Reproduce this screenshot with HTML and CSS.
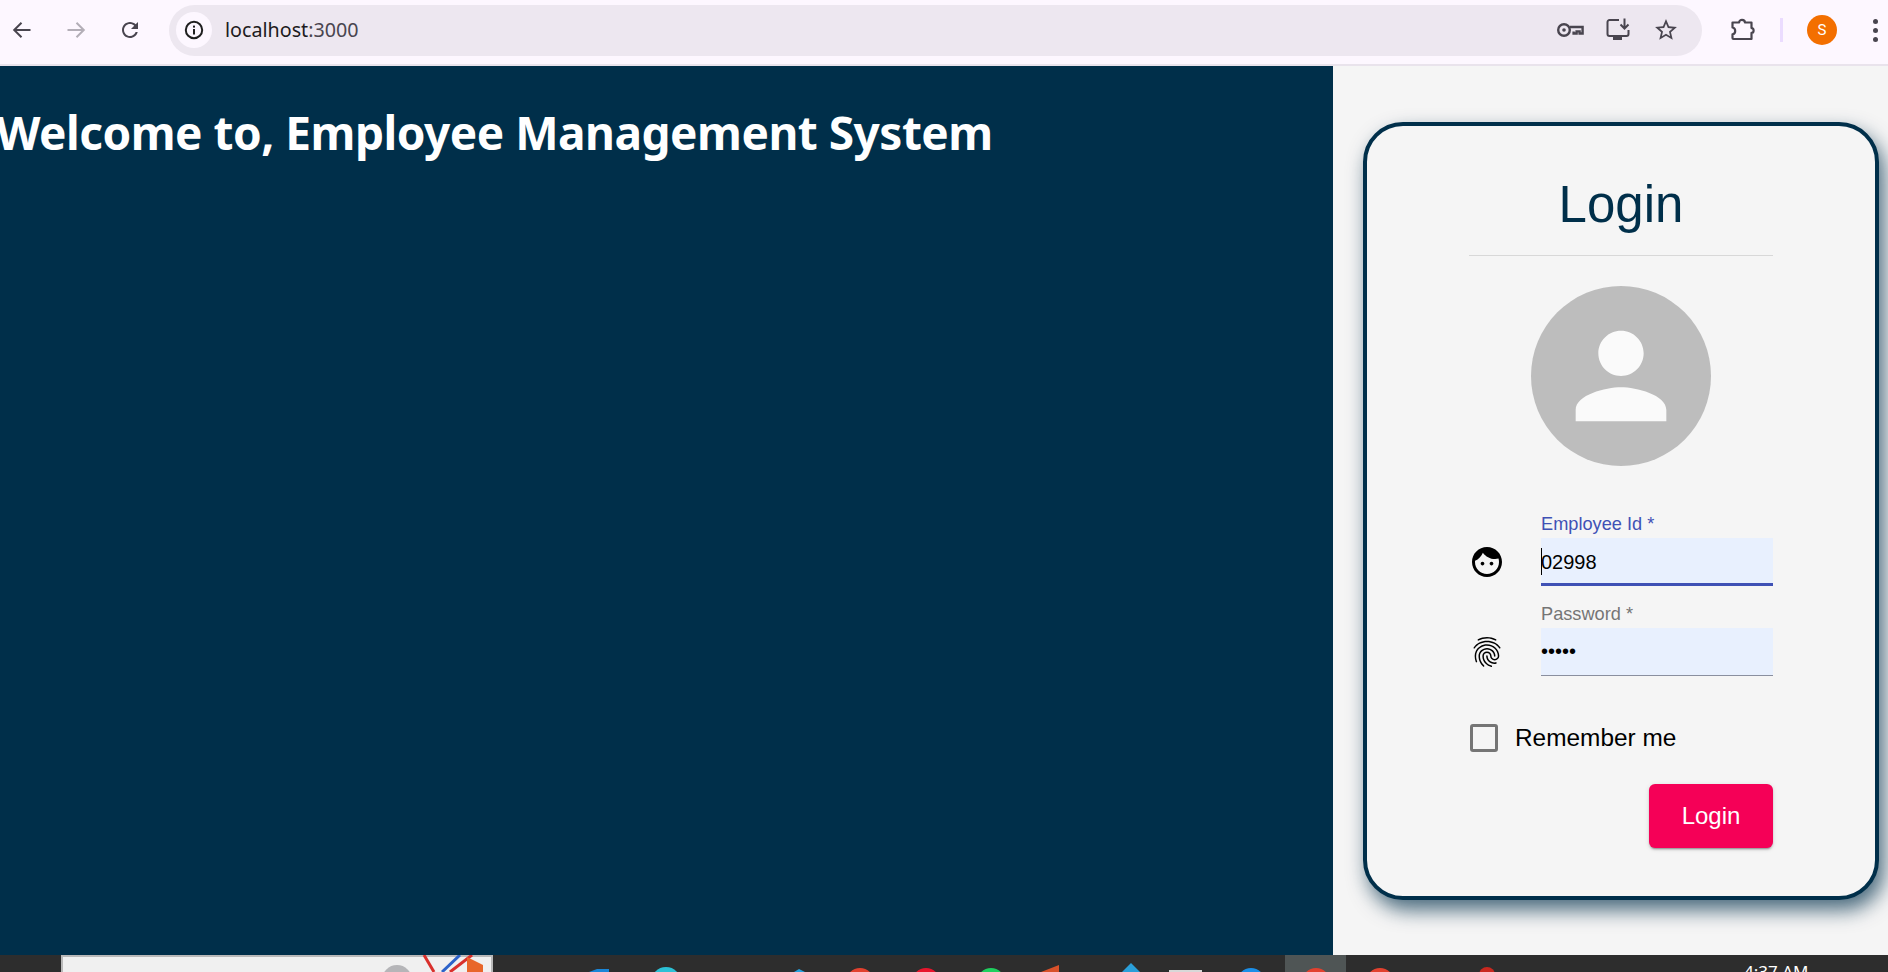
FILE: index.html
```html
<!DOCTYPE html>
<html lang="en">
<head>
    <meta charset="UTF-8">
    <title>Employee Management System</title>
    <link rel="stylesheet" href="styles.css">
</head>
<body>

<div class="toolbar">
    <div class="nav-btn">
        <svg width="24" height="24" viewBox="0 0 24 24" fill="none" stroke="#49454f" stroke-width="2"><path d="M20.5 12H4.5M11.5 4.7 4.2 12l7.3 7.3"/></svg>
    </div>
    <div class="nav-btn">
        <svg width="24" height="24" viewBox="0 0 24 24" fill="none" stroke="#b3aeb7" stroke-width="2"><path d="M3.5 12h16M12.5 4.7l7.3 7.3-7.3 7.3"/></svg>
    </div>
    <div class="nav-btn">
        <svg width="24" height="24" viewBox="0 0 24 24" fill="#49454f"><path d="M17.65 6.35C16.2 4.9 14.21 4 12 4c-4.42 0-7.99 3.58-7.99 8s3.57 8 7.99 8c3.73 0 6.84-2.55 7.73-6h-2.08c-.82 2.33-3.04 4-5.65 4-3.31 0-6-2.69-6-6s2.69-6 6-6c1.66 0 3.14.69 4.22 1.78L13 11h7V4l-2.35 2.35z"/></svg>
    </div>

    <div class="url-bar">
        <div class="info-chip">
            <svg width="24" height="24" viewBox="0 0 24 24" fill="#1f1f1f"><circle cx="12" cy="12" r="8.2" fill="none" stroke="#1f1f1f" stroke-width="2"/><rect x="11" y="11" width="2" height="5.5"/><rect x="11" y="7.6" width="2" height="2"/></svg>
        </div>
        <span class="url-text">localhost<span class="url-port">:3000</span></span>
        <div class="url-icons">
            <svg width="24" height="24" viewBox="0 0 24 24" fill="none" stroke="#49454f" stroke-width="2.4"><circle cx="6" cy="12" r="5.8"/><circle cx="6" cy="12" r="1.8" fill="#49454f" stroke="none"/><path d="M12 9h12.6v6.5h-3V13.4h-3v2.1h-3V13.4"/></svg>
            <svg width="24" height="24" viewBox="0 0 24 24" fill="none" stroke="#49454f" stroke-width="2"><path d="M13 2H3.5A2 2 0 0 0 1.5 4v12a2 2 0 0 0 2 2h17a2 2 0 0 0 2-2v-4"/><path d="M18.5 0.5V10M14.5 6.5l4 4 4-4"/><rect x="7" y="19" width="9" height="3" fill="#49454f" stroke="none"/></svg>
            <svg width="24" height="24" viewBox="1 1 22 22" fill="#49454f"><path d="M22 9.24l-7.19-.62L12 2 9.19 8.63 2 9.24l5.46 4.73L5.82 21 12 17.27 18.18 21l-1.63-7.03L22 9.24zM12 15.4l-3.76 2.27 1-4.28-3.32-2.88 4.38-.38L12 6.1l1.71 4.04 4.38.38-3.32 2.88 1 4.28L12 15.4z"/></svg>
        </div>
    </div>

    <svg class="ext-icon" width="24" height="24" viewBox="0 0 24 24" fill="none" stroke="#49454f" stroke-width="2.2" stroke-linejoin="round"><path d="M2.5 4.5h6.6c0-3.4 5.8-3.4 5.8 0h6.6v5.6c2.8 0 2.8 4.8 0 4.8v6.1H3.5a1 1 0 0 1-1-1v-3.6c3.6-.6 3.6-6.3 0-6.9z"/></svg>
    <div class="separator"></div>
    <div class="profile">S</div>
    <div class="menu-dots"><i></i><i></i><i></i></div>
</div>

<div class="main">
    <div class="welcome">
        <h1>Welcome to, Employee Management System</h1>
    </div>

    <div class="side">
        <form class="card">
            <h2 class="card-title">Login</h2>

            <div class="avatar">
                <svg width="136" height="136" viewBox="0 0 24 24" fill="#fafafa"><path d="M12 12c2.21 0 4-1.79 4-4s-1.79-4-4-4-4 1.79-4 4 1.79 4 4 4zm0 2c-2.67 0-8 1.34-8 4v2h16v-2c0-2.66-5.33-4-8-4z"/></svg>
            </div>

            <div class="field-row first-row">
                <svg class="field-icon" width="36" height="36" viewBox="0 0 24 24"><path d="M9 11.75c-.69 0-1.25.56-1.25 1.25s.56 1.25 1.25 1.25 1.25-.56 1.25-1.25-.56-1.25-1.25-1.25zm6 0c-.69 0-1.25.56-1.25 1.25s.56 1.25 1.25 1.25 1.25-.56 1.25-1.25-.56-1.25-1.25-1.25zM12 2C6.48 2 2 6.48 2 12s4.48 10 10 10 10-4.48 10-10S17.52 2 12 2zm0 18c-4.41 0-8-3.59-8-8 0-.29.02-.58.05-.86 2.36-1.05 4.23-2.98 5.21-5.37C11.07 8.33 14.05 10 17.42 10c.78 0 1.53-.09 2.25-.26.21.71.33 1.47.33 2.26 0 4.41-3.59 8-8 8z"/></svg>
                <div class="field focused">
                    <label class="field-label">Employee Id *</label>
                    <div class="input-wrap">
                        <input class="field-input" type="text" value="02998">
                        <span class="caret"></span>
                    </div>
                </div>
            </div>

            <div class="field-row">
                <svg class="field-icon" width="36" height="36" viewBox="0 0 24 24"><path d="M17.81 4.47c-.08 0-.16-.02-.23-.06C15.66 3.42 14 3 12.01 3c-1.98 0-3.86.47-5.57 1.41-.24.13-.54.04-.68-.2-.13-.24-.04-.55.2-.68C7.82 2.52 9.86 2 12.01 2c2.13 0 3.99.47 6.03 1.52.25.13.34.43.21.67-.09.18-.26.28-.44.28zM3.5 9.72c-.1 0-.2-.03-.29-.09-.23-.16-.28-.47-.12-.7.99-1.4 2.25-2.5 3.75-3.27C9.98 4.04 14 4.03 17.15 5.65c1.5.77 2.76 1.86 3.75 3.25.16.22.11.54-.12.7-.23.16-.54.11-.7-.12-.9-1.26-2.04-2.25-3.39-2.94-2.87-1.47-6.54-1.47-9.4.01-1.36.7-2.5 1.7-3.4 2.96-.08.14-.23.21-.39.21zm6.25 12.07c-.13 0-.26-.05-.35-.15-.87-.87-1.34-1.43-2.01-2.64-.69-1.23-1.05-2.73-1.05-4.34 0-2.97 2.54-5.39 5.66-5.39s5.66 2.42 5.66 5.39c0 .28-.22.5-.5.5s-.5-.22-.5-.5c0-2.42-2.09-4.39-4.66-4.39-2.57 0-4.66 1.97-4.66 4.39 0 1.44.32 2.77.93 3.85.64 1.15 1.08 1.64 1.85 2.42.19.2.19.51 0 .71-.11.1-.24.15-.37.15zm7.17-1.85c-1.19 0-2.24-.3-3.1-.89-1.49-1.01-2.38-2.65-2.38-4.39 0-.28.22-.5.5-.5s.5.22.5.5c0 1.41.72 2.74 1.94 3.56.71.48 1.54.71 2.54.71.24 0 .64-.03 1.04-.1.27-.05.53.13.58.41.05.27-.13.53-.41.58-.57.11-1.07.12-1.21.12zM14.91 22c-.04 0-.09-.01-.13-.02-1.59-.44-2.63-1.03-3.72-2.1-1.4-1.39-2.17-3.24-2.17-5.22 0-1.62 1.38-2.94 3.08-2.94 1.7 0 3.08 1.32 3.08 2.94 0 1.07.93 1.94 2.08 1.94s2.08-.87 2.08-1.94c0-3.77-3.25-6.83-7.25-6.83-2.84 0-5.44 1.58-6.61 4.03-.39.81-.59 1.76-.59 2.8 0 .78.07 2.01.67 3.61.1.26-.03.55-.29.64-.26.1-.55-.04-.64-.29-.49-1.31-.73-2.61-.73-3.96 0-1.2.23-2.29.68-3.24 1.33-2.79 4.28-4.6 7.51-4.6 4.55 0 8.25 3.51 8.25 7.83 0 1.62-1.38 2.94-3.08 2.94s-3.08-1.32-3.08-2.94c0-1.07-.93-1.94-2.08-1.94s-2.08.87-2.08 1.94c0 1.71.66 3.31 1.87 4.51.95.94 1.86 1.46 3.27 1.85.27.07.42.35.35.61-.05.23-.26.38-.47.38z"/></svg>
                <div class="field">
                    <label class="field-label">Password *</label>
                    <div class="input-wrap">
                        <input class="field-input" type="password" value="12345">
                    </div>
                </div>
            </div>

            <label class="remember">
                <input class="remember-box" type="checkbox">
                <span>Remember me</span>
            </label>

            <div class="actions">
                <button class="login-btn" type="button">Login</button>
            </div>
        </form>
    </div>
</div>

<div class="taskbar">
    <svg class="task-icons" width="1744" height="17" viewBox="0 0 1744 17">
        <rect x="62" y="1" width="430" height="20" fill="#f0f0f0" stroke="#b9b9b9" stroke-width="2"/>
        <circle cx="397" cy="25" r="15" fill="#b5b5b8"/>
        <path d="M424 0l10 17" stroke="#d9302c" stroke-width="3"/>
        <path d="M460 0l-18 17" stroke="#2c62c9" stroke-width="3"/>
        <path d="M472 0l-22 17" stroke="#d9302c" stroke-width="3"/>
        <path d="M467 17V2l16 8v7z" fill="#e8662a"/>
        <path d="M589 17l8-3h12v3z" fill="#1a86d8"/>
        <circle cx="666" cy="27" r="15" fill="#2cc1d6"/>
        <path d="M794 17l5-3 6 3z" fill="#27a2e0"/>
        <rect x="1285" y="0" width="61" height="17" fill="#4f5555"/>
        <circle cx="860" cy="27" r="14" fill="#e2412f"/>
        <circle cx="926" cy="27" r="14" fill="#e8152c"/>
        <circle cx="991" cy="27" r="14" fill="#1fd05f"/>
        <path d="M1041 17l18-7v7z" fill="#d9512a"/>
        <path d="M1122 17l9-9 9 9z" fill="#2a9fd9"/>
        <rect x="1169" y="15" width="33" height="2" fill="#d8d8d8"/>
        <circle cx="1251" cy="27" r="14" fill="#1b8fe8"/>
        <circle cx="1316" cy="27" r="14" fill="#e2412f"/>
        <circle cx="1380" cy="27" r="14" fill="#e2412f"/>
        <circle cx="1487" cy="20" r="8" fill="#c9281f"/>
    </svg>
    <span class="clock">4:37 AM</span>
</div>

</body>
</html>
```

FILE: styles.css
```css
*{
    margin: 0;
    padding: 0;
    box-sizing: border-box;
}

html, body{
    height: 972px;
    overflow: hidden;
}

body{
    display: flex;
    flex-direction: column;
    font-family: "Liberation Sans", Arial, sans-serif;
    background-color: #f5f5f5;
}

/* browser bar */
.toolbar{
    height: 66px;
    flex: none;
    display: flex;
    align-items: center;
    padding: 4px 0 8px;
    background-color: #fdf7ff;
    border-bottom: 2px solid #e9e3ec;
}

.nav-btn{
    width: 44px;
    height: 44px;
    margin-right: 10px;
    display: flex;
    align-items: center;
    justify-content: center;
}

.url-bar{
    width: 1533px;
    height: 51px;
    margin-left: 7px;
    padding: 0 24px 0 7px;
    display: flex;
    align-items: center;
    background-color: #ede7f0;
    border-radius: 26px;
}

.info-chip{
    width: 36px;
    height: 36px;
    display: flex;
    align-items: center;
    justify-content: center;
    background-color: #fdf7ff;
    border-radius: 50%;
}

.url-text{
    margin-left: 13px;
    padding-bottom: 2px;
    font-family: "Noto Sans", sans-serif;
    font-size: 19.7px;
    color: #1d1b20;
}

.url-port{
    color: #49454f;
}

.url-icons{
    margin-left: auto;
    display: flex;
    gap: 24px;
}

.url-icons svg,
.ext-icon{
    overflow: visible;
    flex: none;
}

.ext-icon{
    margin-left: 28px;
}

.separator{
    width: 3px;
    height: 24px;
    margin-left: 26px;
    background-color: #ebdcff;
}

.profile{
    width: 30px;
    height: 30px;
    margin-left: 24px;
    display: flex;
    align-items: center;
    justify-content: center;
    font-family: "Roboto", sans-serif;
    font-size: 15px;
    color: #fff;
    background-color: #f36f00;
    border-radius: 50%;
}

.menu-dots{
    margin-left: 36px;
    display: flex;
    flex-direction: column;
    gap: 4px;
}

.menu-dots i{
    display: block;
    width: 5px;
    height: 5px;
    background-color: #49454f;
    border-radius: 50%;
}

/* page */
.main{
    height: 889px;
    flex: none;
    display: flex;
}

.welcome{
    width: 1333px;
    overflow: hidden;
    padding-top: 34px;
    background-color: #002f4a;
}

.welcome h1{
    margin-left: -4px;
    font-family: "Noto Sans", sans-serif;
    font-size: 46px;
    font-weight: 700;
    letter-spacing: -.5px;
    line-height: 65px;
    white-space: nowrap;
    color: #fff;
}

.side{
    flex: 1;
    padding: 56px 0 0 30px;
}

.card{
    width: 516px;
    height: 778px;
    padding: 50px 102px 0;
    background-color: #f5f5f5;
    border: 4px solid #002f4a;
    border-radius: 40px;
    box-shadow: 5px 10px 20px rgba(0, 47, 74, .7);
}

.card-title{
    padding-bottom: 21px;
    font-size: 51px;
    font-weight: 400;
    line-height: 58px;
    text-align: center;
    color: #002f4a;
    border-bottom: 1px solid #d8d8d8;
}

.avatar{
    width: 180px;
    height: 180px;
    margin: 30px auto 0;
    display: flex;
    align-items: center;
    justify-content: center;
    background-color: #bdbdbd;
    border-radius: 50%;
}

/* form fields */
.field-row{
    display: flex;
    align-items: flex-end;
    margin-top: 19px;
}

.first-row{
    margin-top: 49px;
}

.field-icon{
    flex: none;
    margin: 0 36px 6px 0;
}

.field{
    width: 232px;
}

.field-label{
    display: block;
    padding-bottom: 4px;
    font-size: 18.2px;
    line-height: 19px;
    color: #757575;
}

.field.focused .field-label{
    color: #3f51b5;
}

.input-wrap{
    position: relative;
    height: 48px;
    background-color: #e8f0fe;
    border-bottom: 1px solid #8a8f9f;
}

.field.focused .input-wrap{
    border-bottom: 3px solid #3f51b5;
}

.field-input{
    display: block;
    width: 100%;
    height: 100%;
    font-family: "Liberation Sans", Arial, sans-serif;
    font-size: 20px;
    color: #000;
    background: transparent;
    border: 0;
    outline: 0;
}

.field.focused .field-input{
    padding-top: 4px;
}

.caret{
    position: absolute;
    left: 0;
    top: 10px;
    width: 1px;
    height: 27px;
    background-color: #000;
}

.remember{
    display: flex;
    align-items: center;
    height: 28px;
    margin-top: 48px;
    font-size: 24.4px;
    color: #000;
}

.remember-box{
    appearance: none;
    width: 28px;
    height: 28px;
    margin: 0 17px 0 1px;
    border: 3px solid #757575;
    border-radius: 3px;
}

.actions{
    display: flex;
    justify-content: flex-end;
    margin-top: 32px;
}

.login-btn{
    width: 124px;
    height: 64px;
    font-family: "Liberation Sans", Arial, sans-serif;
    font-size: 24px;
    color: #fff;
    background-color: #f50057;
    border: 0;
    border-radius: 6px;
    box-shadow: 0 3px 1px -2px rgba(0,0,0,.2), 0 2px 2px 0 rgba(0,0,0,.14), 0 1px 5px 0 rgba(0,0,0,.12);
}

/* windows taskbar, cut off by the bottom of the window */
.taskbar{
    height: 17px;
    flex: none;
    display: flex;
    overflow: hidden;
    background-color: #2d2d2d;
}

.task-icons{
    flex: none;
    display: block;
}

.clock{
    font-family: "Noto Sans", sans-serif;
    font-size: 17px;
    line-height: 22px;
    margin-top: 6px;
    color: #fff;
    white-space: nowrap;
}
```
